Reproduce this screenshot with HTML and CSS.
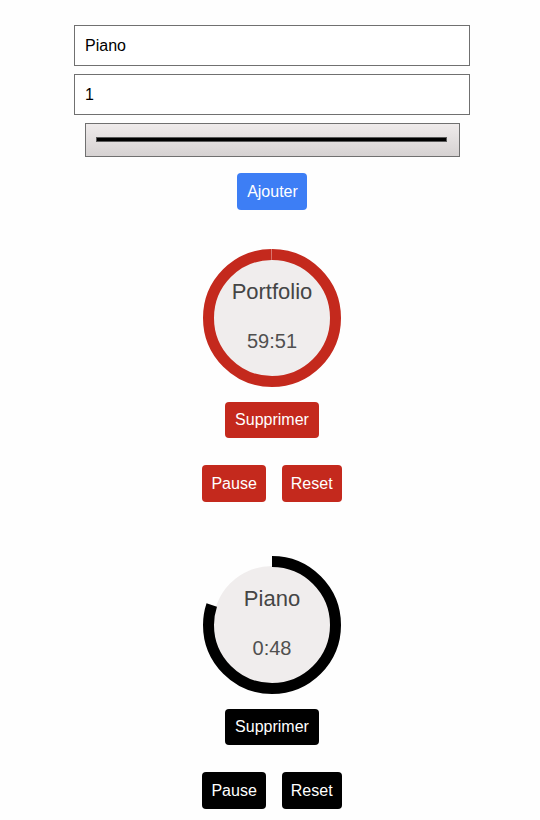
FILE: index.html
```html
<!DOCTYPE html>
<html lang="fr">
<head>
<meta charset="utf-8">
<title>Minuteurs</title>
<link rel="stylesheet" href="styles.css">
</head>
<body>
<div class="app">
  <form class="form">
    <input class="field" type="text" value="Piano">
    <input class="field" type="text" value="1">
    <div class="slider"><div class="slider-track"></div></div>
    <button type="button" class="btn btn-add">Ajouter</button>
  </form>

  <div class="timers">
    <section class="timer timer-red">
      <div class="dial">
        <svg class="dial-svg" viewBox="0 0 138 138" width="138" height="138">
          <circle cx="69" cy="69" r="59" fill="#f0eded"></circle>
          <circle class="dial-arc" cx="69" cy="69" r="63.5" fill="none" stroke-width="11" stroke-dasharray="397.98 398.98" transform="rotate(-90 69 69)"></circle>
        </svg>
        <div class="dial-text">
          <div class="dial-label">Portfolio</div>
          <div class="dial-time">59:51</div>
        </div>
      </div>
      <button type="button" class="btn btn-del">Supprimer</button>
      <div class="controls">
        <button type="button" class="btn btn-ctl">Pause</button>
        <button type="button" class="btn btn-ctl">Reset</button>
      </div>
    </section>

    <section class="timer timer-black">
      <div class="dial">
        <svg class="dial-svg" viewBox="0 0 138 138" width="138" height="138">
          <circle cx="69" cy="69" r="59" fill="#f0eded"></circle>
          <circle class="dial-arc" cx="69" cy="69" r="63.5" fill="none" stroke-width="11" stroke-dasharray="319.19 398.98" transform="rotate(-90 69 69)"></circle>
        </svg>
        <div class="dial-text">
          <div class="dial-label">Piano</div>
          <div class="dial-time">0:48</div>
        </div>
      </div>
      <button type="button" class="btn btn-del">Supprimer</button>
      <div class="controls">
        <button type="button" class="btn btn-ctl">Pause</button>
        <button type="button" class="btn btn-ctl">Reset</button>
      </div>
    </section>
  </div>
</div>
</body>
</html>
```

FILE: styles.css
```css
html, body {
  margin: 0;
  padding: 0;
  background: #fefefe;
}

body {
  font-family: "Liberation Sans", Arial, sans-serif;
  font-size: 16px;
  color: #000;
}

.app {
  width: 540px;
  box-sizing: border-box;
  padding: 25px 0 0 4px;
  display: flex;
  flex-direction: column;
  align-items: center;
}

.form {
  margin: 0;
  display: flex;
  flex-direction: column;
  align-items: center;
  gap: 8px;
}

.field {
  box-sizing: border-box;
  width: 396px;
  height: 41px;
  margin: 0;
  padding: 0 10px;
  border: 1px solid #707070;
  border-radius: 0;
  background: #fff;
  font-family: "Liberation Sans", Arial, sans-serif;
  font-size: 16px;
  color: #000;
  outline: none;
}

.slider {
  box-sizing: border-box;
  width: 375px;
  height: 34px;
  border: 1px solid #707070;
  background: linear-gradient(#efebeb, #d6d2d2);
  display: flex;
  align-items: center;
  padding: 0 12px 0 10px;
}

.slider-track {
  flex: 1;
  height: 3px;
  background: #000;
  border: 1px solid #5a5a5a;
  margin-top: -1px;
}

.btn {
  box-sizing: border-box;
  border: none;
  border-radius: 4px;
  margin: 0;
  padding: 0 10px;
  font-family: "Liberation Sans", Arial, sans-serif;
  font-size: 16px;
  color: #fff;
  cursor: pointer;
}

.btn-add {
  margin-top: 8px;
  height: 37px;
  padding: 0 9px 0 10px;
  background: #3d7ef5;
}

.timers {
  margin-top: 39px;
  display: flex;
  flex-direction: column;
  align-items: center;
  gap: 54px;
}

.timer {
  display: flex;
  flex-direction: column;
  align-items: center;
}

.dial {
  width: 138px;
  height: 138px;
  display: grid;
}

.dial-svg,
.dial-text {
  grid-area: 1 / 1;
}

.dial-svg {
  display: block;
}

.dial-text {
  padding-top: 30px;
  text-align: center;
}

.dial-label {
  font-size: 22px;
  line-height: 26px;
  color: #454545;
}

.dial-time {
  margin-top: 23px;
  font-size: 20px;
  line-height: 26px;
  color: #505050;
}

.timer-red .dial-arc { stroke: #c4291d; }
.timer-black .dial-arc { stroke: #000; }

.btn-del {
  margin-top: 15px;
  height: 36px;
}

.controls {
  margin-top: 27px;
  display: flex;
  gap: 16px;
}

.btn-ctl {
  height: 37px;
  padding: 0 9px;
}

.timer-red .btn { background: #c4291d; }
.timer-black .btn { background: #000; }
```
